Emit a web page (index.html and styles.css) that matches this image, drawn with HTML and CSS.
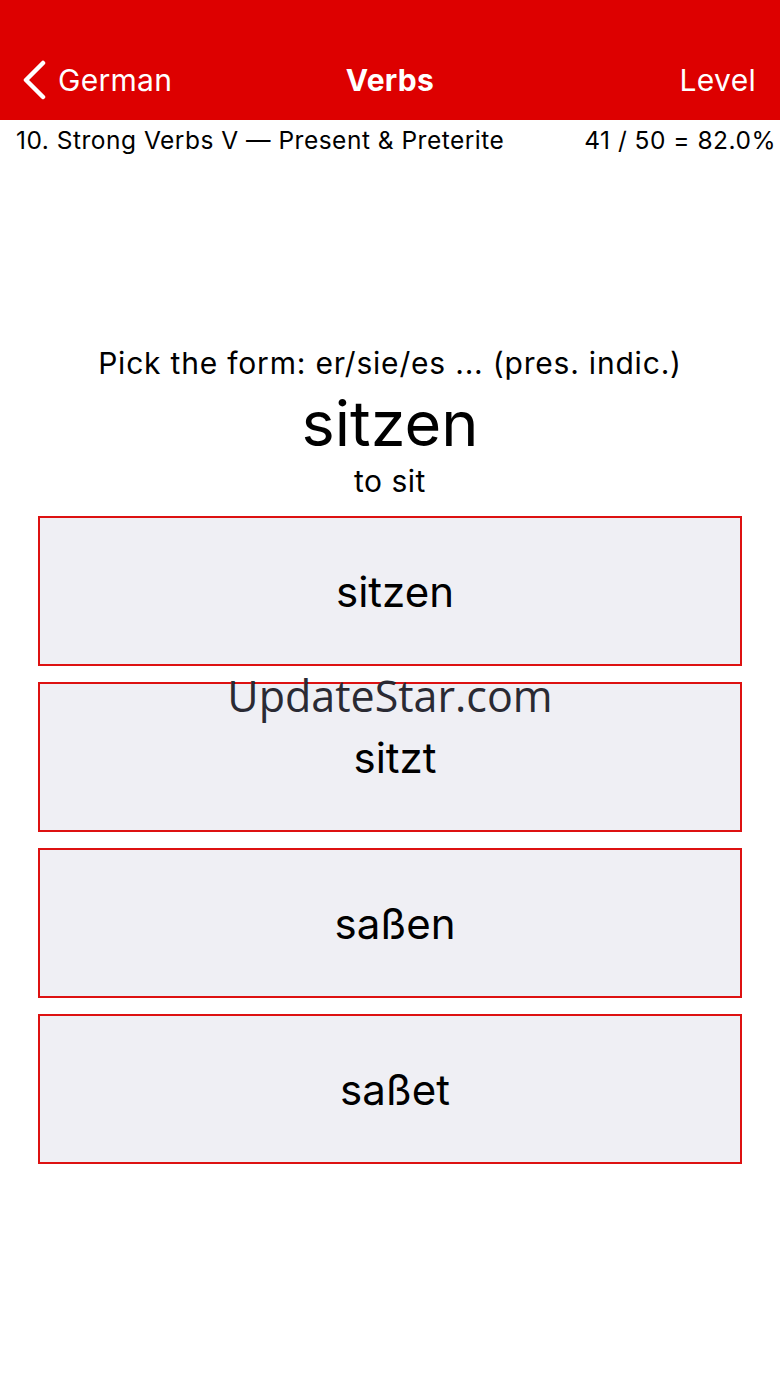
FILE: index.html
```html
<!DOCTYPE html>
<html lang="en">
<head>
    <meta charset="UTF-8">
    <meta name="viewport" content="width=device-width, initial-scale=1.0">
    <title>Verbs</title>
    <link rel="stylesheet" href="styles.css">
</head>
<body>

    <!-- nav bar -->
    <div class="header">
        <div class="nav">
            <a class="back" href="#">
                <svg class="chevron" width="26" height="40" viewBox="0 0 26 40">
                    <polyline points="21,3 4,20 21,37" fill="none" stroke="#fff" stroke-width="4.5" stroke-linecap="round" stroke-linejoin="round"/>
                </svg>
                <span>German</span>
            </a>
            <div class="title">Verbs</div>
            <a class="level" href="#">Level</a>
        </div>
    </div>

    <div class="info">
        <span>10. Strong Verbs V — Present &amp; Preterite</span>
        <span>41 / 50 = 82.0%</span>
    </div>

    <!-- question -->
    <div class="quiz">
        <div class="prompt">Pick the form: er/sie/es ... (pres. indic.)</div>
        <div class="word">sitzen</div>
        <div class="gloss">to sit</div>

        <div class="answers">
            <button class="answer">sitzen</button>
            <button class="answer">sitzt</button>
            <button class="answer">saßen</button>
            <button class="answer">saßet</button>
        </div>

        <div class="watermark">UpdateStar.com</div>
    </div>

</body>
</html>
```

FILE: styles.css
```css
body {
    margin: 0;
    font-family: Inter, "Liberation Sans", sans-serif;
    color: #000;
    background: #fff;
}

.header {
    background-color: #dd0000;
    height: 120px;
    padding-top: 40px;
    box-sizing: border-box;
}

.nav {
    display: flex;
    justify-content: space-between;
    align-items: center;
    height: 80px;
    padding: 0 24px 0 22px;
    position: relative;
    color: white;
    font-size: 30px;
    letter-spacing: 0.3px;
}

.back, .level {
    color: white;
    text-decoration: none;
    display: flex;
    align-items: center;
}

.back span {
    margin-left: 10px;
}

.title {
    position: absolute;
    left: 0;
    right: 0;
    text-align: center;
    font-weight: bold;
    pointer-events: none;
}

.info {
    display: flex;
    justify-content: space-between;
    padding: 6px 4px 0 16px;
    font-size: 24.5px;
    line-height: 28px;
    letter-spacing: 0.5px;
}

.quiz {
    position: relative;
    padding-top: 191px;
    text-align: center;
}

.prompt {
    font-size: 30px;
    line-height: 36px;
    letter-spacing: 0.8px;
}

.word {
    font-size: 63px;
    line-height: 64px;
    margin-top: 10px;
}

.gloss {
    font-size: 30px;
    line-height: 36px;
    margin-top: 8px;
    letter-spacing: 0.5px;
}

.answers {
    display: flex;
    flex-direction: column;
    gap: 16px;
    margin: 17px 38px 0 38px;
}

.answer {
    height: 150px;
    background-color: #efeff4;
    border: 2px solid #dd1111;
    font-family: inherit;
    font-size: 42px;
    color: #000;
    padding: 0 0 0 10px;
}

.watermark {
    position: absolute;
    left: 0;
    right: 0;
    top: 512px;
    text-align: center;
    font-family: "Open Sans", sans-serif;
    font-size: 43px;
    color: #2a2a33;
    pointer-events: none;
}
```
